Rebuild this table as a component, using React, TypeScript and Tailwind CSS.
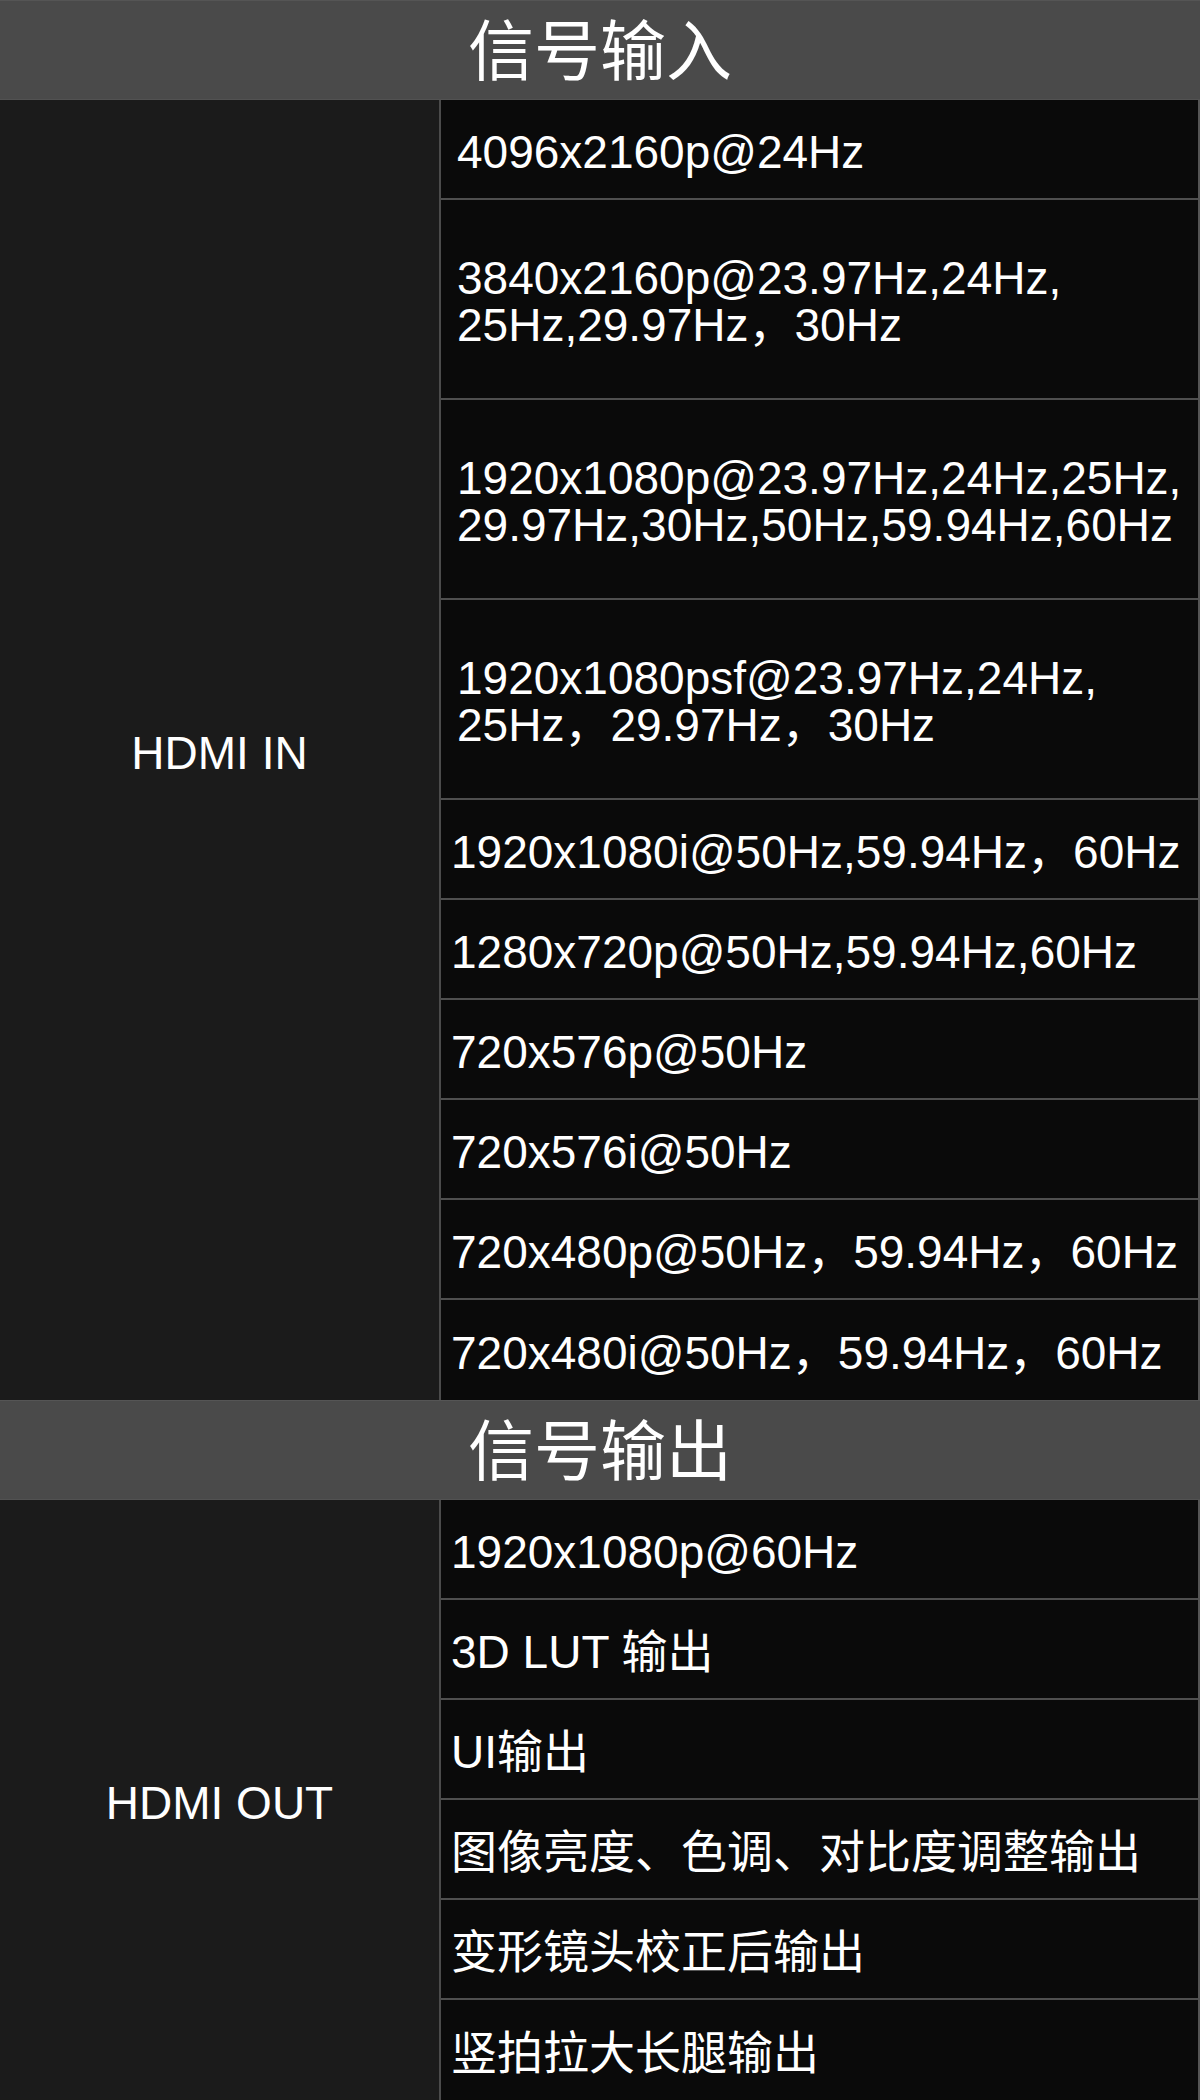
const FONT = '"Liberation Sans", "Noto Sans CJK SC", sans-serif';

type Row = { text: string[]; tall?: boolean; pad: string };

const inputRows: Row[] = [
  { text: ["4096x2160p@24Hz"], pad: "pl-4" },
  { text: ["3840x2160p@23.97Hz,24Hz,", "25Hz,29.97Hz，30Hz"], tall: true, pad: "pl-4" },
  { text: ["1920x1080p@23.97Hz,24Hz,25Hz,", "29.97Hz,30Hz,50Hz,59.94Hz,60Hz"], tall: true, pad: "pl-4" },
  { text: ["1920x1080psf@23.97Hz,24Hz,", "25Hz，29.97Hz，30Hz"], tall: true, pad: "pl-4" },
  { text: ["1920x1080i@50Hz,59.94Hz，60Hz"], pad: "pl-[10px]" },
  { text: ["1280x720p@50Hz,59.94Hz,60Hz"], pad: "pl-[10px]" },
  { text: ["720x576p@50Hz"], pad: "pl-[10px]" },
  { text: ["720x576i@50Hz"], pad: "pl-[10px]" },
  { text: ["720x480p@50Hz，59.94Hz，60Hz"], pad: "pl-[10px]" },
  { text: ["720x480i@50Hz，59.94Hz，60Hz"], pad: "pl-[10px]" },
];

const outputRows: Row[] = [
  { text: ["1920x1080p@60Hz"], pad: "pl-[10px]" },
  { text: ["3D LUT 输出"], pad: "pl-[10px]" },
  { text: ["UI输出"], pad: "pl-[10px]" },
  { text: ["图像亮度、色调、对比度调整输出"], pad: "pl-[10px]" },
  { text: ["变形镜头校正后输出"], pad: "pl-[10px]" },
  { text: ["竖拍拉大长腿输出"], pad: "pl-[10px]" },
];

function SectionHeader({ title }: { title: string }) {
  return (
    <div className="h-[100px] bg-[#4a4a4a] border-t border-[#555555] border-b border-b-[#525252] flex items-center justify-center pt-[4px]">
      <span className="text-[66px] leading-none text-white" style={{ fontFamily: FONT }}>
        {title}
      </span>
    </div>
  );
}

function Section({ label, rows }: { label: string; rows: Row[] }) {
  return (
    <div className="flex">
      <div className="w-[441px] shrink-0 bg-[#1b1b1b] border-r-2 border-[#4b4b4b] flex items-center justify-center pt-[6px]">
        <span className="text-[46px] leading-none text-white">{label}</span>
      </div>
      <div className="flex-1 flex flex-col bg-[#0a0a0a] border-r-2 border-[#555555]">
        {rows.map((r, i) => (
          <div
            key={i}
            className={`${r.tall ? "h-[200px]" : "h-[100px]"} ${r.pad} pt-[6px] flex flex-col justify-center text-[46px] leading-[47px] text-white ${
              i < rows.length - 1 ? "border-b-2 border-[#4f4f4f]" : ""
            }`}
          >
            {r.text.map((t, j) => (
              <div key={j} className="whitespace-nowrap">
                {t}
              </div>
            ))}
          </div>
        ))}
      </div>
    </div>
  );
}

export default function App() {
  return (
    <div className="w-[1200px] h-[2100px] bg-[#0a0a0a] overflow-hidden" style={{ fontFamily: FONT }}>
      <SectionHeader title="信号输入" />
      <Section label="HDMI IN" rows={inputRows} />
      <SectionHeader title="信号输出" />
      <Section label="HDMI OUT" rows={outputRows} />
    </div>
  );
}
